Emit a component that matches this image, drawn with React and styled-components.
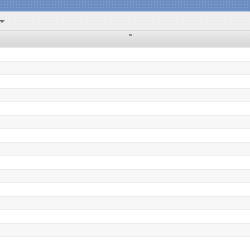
import styled, { createGlobalStyle } from "styled-components";

const Global = createGlobalStyle`
  html, body { margin: 0; padding: 0; background: #fff; }
  body { font-family: "Liberation Sans", Arial, sans-serif; width: 250px; height: 250px; overflow: hidden; }
`;

const Page = styled.div`
  display: flex;
  flex-direction: column;
  width: 250px;
  height: 250px;
  overflow: hidden;
`;

const TitleBar = styled.div`
  height: 11px;
  background-color: #6c8ec2;
  background-image: radial-gradient(rgba(255, 255, 255, 0.18) 0.6px, transparent 0.8px);
  background-size: 3px 3px;
  border-bottom: 1px solid #b9c7da;
`;

const Toolbar = styled.div`
  height: 19px;
  display: flex;
  align-items: center;
  background-color: #efefef;
  background-image: radial-gradient(rgba(0, 0, 0, 0.025) 0.6px, transparent 0.8px);
  background-size: 3px 3px;
  border-bottom: 1px solid #d9d9d9;
`;

const Caret = styled.div`
  width: 0;
  height: 0;
  margin-left: -1px;
  margin-top: 1px;
  border-left: 3px solid transparent;
  border-right: 3px solid transparent;
  border-top: 3px solid #6f7780;
`;

const HeaderBand = styled.div`
  height: 15px;
  display: flex;
  justify-content: center;
  padding-top: 2px;
  box-sizing: content-box;
  background: linear-gradient(#ececec, #e2e2e2 40%, #dadada 80%, #d9d9d9);
  border-bottom: 1px solid #e8e8e8;
`;

const Handle = styled.div`
  width: 3px;
  height: 2px;
  margin-left: 10px;
  margin-top: 1px;
  background: #8b95a2;
`;

const Rows = styled.div`
  display: flex;
  flex-direction: column;
`;

const Row = styled.div`
  height: ${(p) => (p.$alt ? 12 : 13)}px;
  background: ${(p) => (p.$alt ? "#f7f7f7" : "#ffffff")};
  border-top: ${(p) => (p.$alt ? "1px solid #ececec" : "none")};
  border-bottom: ${(p) => (p.$alt ? "1px solid #eeeeee" : "none")};
`;

export default function App() {
  const rows = Array.from({ length: 15 }, (_, i) => i % 2 === 1);
  return (
    <Page>
      <Global />
      <TitleBar />
      <Toolbar>
        <Caret />
      </Toolbar>
      <HeaderBand>
        <Handle />
      </HeaderBand>
      <Rows>
        {rows.map((alt, i) => (
          <Row key={i} $alt={alt} />
        ))}
      </Rows>
    </Page>
  );
}
